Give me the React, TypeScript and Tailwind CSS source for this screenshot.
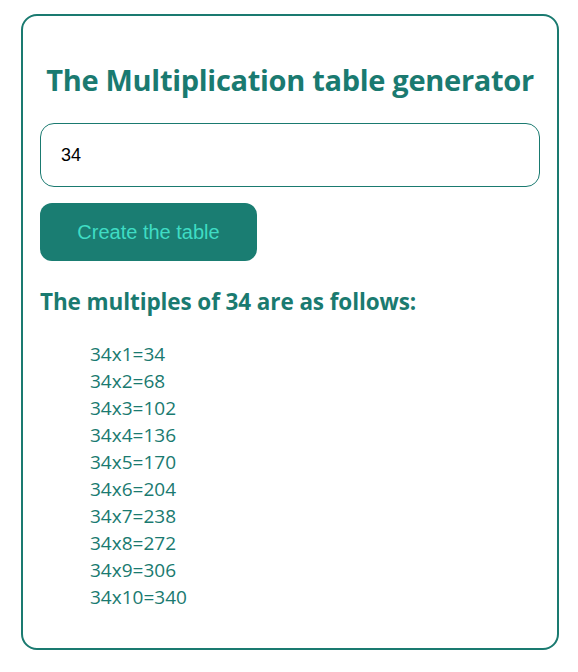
import { useState } from "react";

export default function App() {
  const [value, setValue] = useState("34");
  const [num, setNum] = useState(34);

  const rows = Array.from({ length: 10 }, (_, i) => i + 1);

  return (
    <div className="min-h-screen bg-white pl-[21px] pr-[19px] pt-[14px] pb-[24px] font-['Segoe_UI','Open_Sans',sans-serif]">
      <div className="rounded-[16px] border-2 border-[#1a7a70] pl-[17px] pr-[17px] pt-[45px] pb-[37px]">
        <h1 className="text-center text-[29px] leading-[38px] font-bold text-[#1a7a70] tracking-[-0.3px]">
          The Multiplication table generator
        </h1>
        <input
          value={value}
          onChange={(e) => setValue(e.target.value)}
          className="mt-[24px] block h-[64px] w-full rounded-[14px] border border-[#1a7a70] px-[20px] font-['Liberation_Sans',Arial,sans-serif] text-[18px] text-black outline-none"
        />
        <button
          onClick={() => setNum(Number(value) || 0)}
          className="mt-[16px] h-[58px] w-[217px] rounded-[12px] bg-[#1a7d72] font-['Liberation_Sans',Arial,sans-serif] text-[20px] text-[#3fdcc4]"
        >
          Create the table
        </button>
        <h3 className="mt-[26px] text-[22.5px] leading-[30px] font-bold text-[#1a7a70] tracking-[-0.1px]">
          The multiples of {num} are as follows:
        </h3>
        <ul className="mt-[24px] pl-[50px] text-[19px] leading-[27px] text-[#1a7a70]">
          {rows.map((i) => (
            <li key={i}>
              {num}x{i}={num * i}
            </li>
          ))}
        </ul>
      </div>
    </div>
  );
}
